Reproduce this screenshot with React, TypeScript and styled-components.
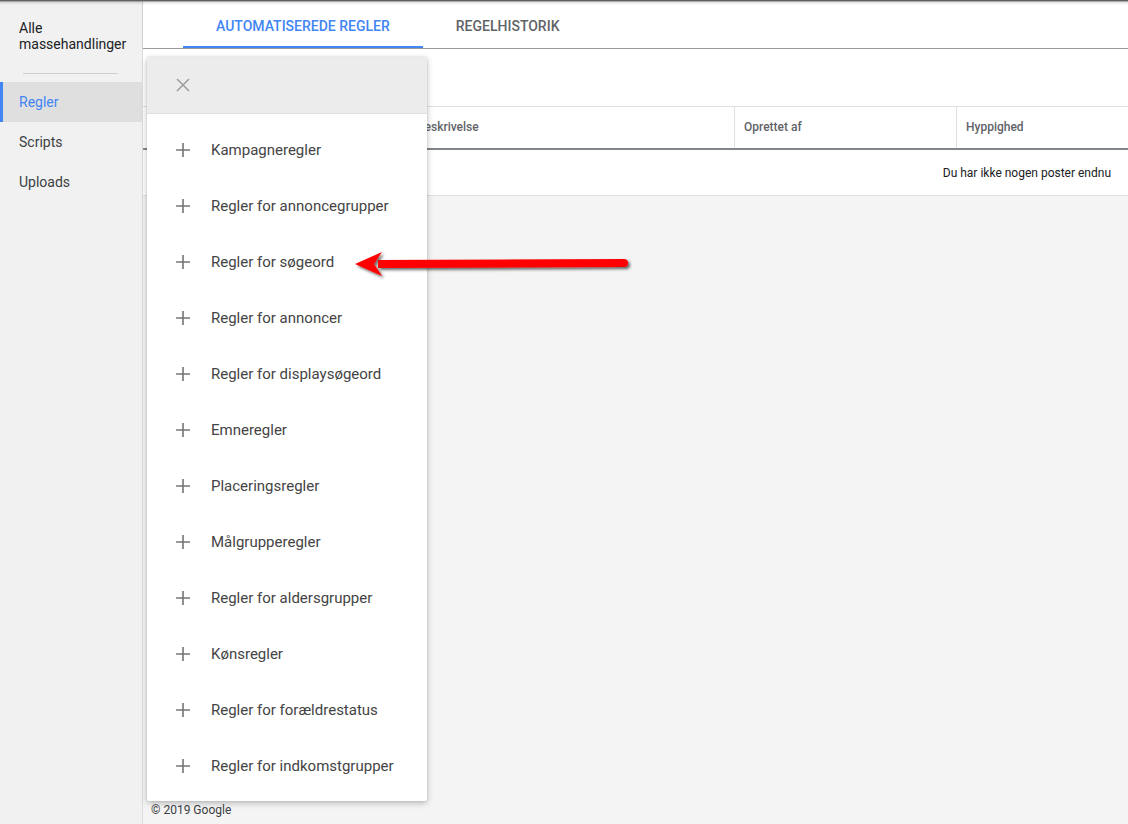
import React from 'react';
import styled, { createGlobalStyle } from 'styled-components';

const GlobalStyle = createGlobalStyle`
  html, body {
    margin: 0;
    padding: 0;
    overflow: hidden;
    font-family: Roboto, "Liberation Sans", Arial, sans-serif;
  }
`;

const Page = styled.div`
  position: relative;
  display: grid;
  grid-template-columns: 143px 1fr;
  width: 1128px;
  height: 824px;
  background-color: #f4f4f4;
`;

const TopShade = styled.div`
  position: absolute;
  top: 0;
  left: 0;
  right: 0;
  height: 5px;
  background: linear-gradient(#4a4a4a 0px, #777 1px, rgba(0, 0, 0, 0.12) 2px, rgba(0, 0, 0, 0));
  z-index: 5;
`;

const Sidebar = styled.nav`
  display: flex;
  flex-direction: column;
  background-color: #f1f1f1;
  border-right: 1px solid #dcdcdc;
  padding-top: 20px;
`;

const SideTitle = styled.div`
  padding: 0 19px;
  font-size: 14px;
  line-height: 16px;
  color: #202124;
`;

const SideDivider = styled.hr`
  border: none;
  border-top: 1px solid #cfcfcf;
  margin: 21px 24px 8px 23px;
`;

const SideItem = styled.div<{ $active?: boolean }>`
  height: 40px;
  display: flex;
  align-items: center;
  padding-left: 19px;
  font-size: 14px;
  color: ${p => (p.$active ? '#4285f4' : '#3c4043')};
  background-color: ${p => (p.$active ? '#dfdfdf' : 'transparent')};
  box-shadow: ${p => (p.$active ? 'inset 3px 0 0 #4285f4' : 'none')};
`;

const Main = styled.main`
  position: relative;
  display: flex;
  flex-direction: column;
  min-width: 0;
`;

const TabBar = styled.div`
  display: flex;
  height: 48px;
  padding-left: 40px;
  background-color: #fff;
  border-bottom: 1px solid #9a9a9a;
  box-shadow: 0 1px 2px rgba(0, 0, 0, 0.15);
`;

const Tab = styled.div<{ $active?: boolean }>`
  display: flex;
  align-items: center;
  padding: 3px 33px 0 33px;
  font-size: 14px;
  font-weight: 500;
  color: ${p => (p.$active ? '#4285f4' : '#5f6368')};
  box-shadow: ${p => (p.$active ? 'inset 0 -2px 0 #4285f4' : 'none')};
`;

const Toolbar = styled.div`
  height: 57px;
  background-color: #fff;
`;

const TableHead = styled.div`
  display: grid;
  grid-template-columns: 591px 222px 1fr;
  height: 41px;
  background-color: #fff;
  border-top: 1px solid #e0e0e0;
  border-bottom: 2px solid #80868b;
`;

const HeadCell = styled.div<{ $pad?: number }>`
  display: flex;
  align-items: center;
  padding-left: ${p => p.$pad ?? 9}px;
  padding-bottom: 1px;
  font-size: 12px;
  font-weight: 500;
  color: #5f6368;
  & + & {
    border-left: 1px solid #e0e0e0;
  }
`;

const EmptyRow = styled.div`
  display: flex;
  align-items: center;
  justify-content: flex-end;
  height: 45px;
  padding-right: 17px;
  background-color: #fff;
  border-bottom: 1px solid #e0e0e0;
  font-size: 12px;
  color: #202124;
`;

const Filler = styled.div`
  flex: 1;
`;

const Footer = styled.div`
  padding: 0 0 7px 8px;
  font-size: 12px;
  color: #3c4043;
`;

const Menu = styled.div`
  position: absolute;
  top: 57px;
  left: 4px;
  width: 280px;
  background-color: #fff;
  border-radius: 2px;
  box-shadow: 0 2px 6px rgba(0, 0, 0, 0.25), 0 0 2px rgba(0, 0, 0, 0.12);
  z-index: 3;
`;

const MenuHeader = styled.div`
  display: flex;
  align-items: center;
  height: 56px;
  padding-left: 28px;
  background-color: #ececec;
  border-bottom: 1px solid #dedede;
  color: #9e9e9e;
`;

const MenuList = styled.div`
  display: flex;
  flex-direction: column;
  padding: 8px 0 7px;
`;

const MenuItem = styled.div`
  display: flex;
  align-items: center;
  height: 56px;
  padding-left: 28px;
  gap: 20px;
  font-size: 15px;
  color: #444;
`;

const PlusIcon = styled.svg`
  width: 16px;
  height: 16px;
  flex: none;
`;

const Arrow = styled.svg`
  position: absolute;
  left: 348px;
  top: 247px;
  z-index: 4;
`;

const rules = [
  'Kampagneregler',
  'Regler for annoncegrupper',
  'Regler for søgeord',
  'Regler for annoncer',
  'Regler for displaysøgeord',
  'Emneregler',
  'Placeringsregler',
  'Målgrupperegler',
  'Regler for aldersgrupper',
  'Kønsregler',
  'Regler for forældrestatus',
  'Regler for indkomstgrupper',
];

function Plus() {
  return (
    <PlusIcon viewBox="0 0 16 16">
      <path d="M8 1v14M1 8h14" stroke="#757575" strokeWidth="1.6" />
    </PlusIcon>
  );
}

function App() {
  return (
    <Page>
      <GlobalStyle />
      <TopShade />
      <Sidebar>
        <SideTitle>
          Alle
          <br />
          massehandlinger
        </SideTitle>
        <SideDivider />
        <SideItem $active>Regler</SideItem>
        <SideItem>Scripts</SideItem>
        <SideItem>Uploads</SideItem>
      </Sidebar>
      <Main>
        <TabBar>
          <Tab $active>AUTOMATISEREDE REGLER</Tab>
          <Tab>REGELHISTORIK</Tab>
        </TabBar>
        <Toolbar />
        <TableHead>
          <HeadCell $pad={274}>Beskrivelse</HeadCell>
          <HeadCell>Oprettet af</HeadCell>
          <HeadCell>Hyppighed</HeadCell>
        </TableHead>
        <EmptyRow>Du har ikke nogen poster endnu</EmptyRow>
        <Filler />
        <Footer>© 2019 Google</Footer>
        <Menu>
          <MenuHeader>
            <svg width="16" height="16" viewBox="0 0 16 16">
              <path d="M2 2l12 12M14 2L2 14" stroke="#9e9e9e" strokeWidth="1.6" />
            </svg>
          </MenuHeader>
          <MenuList>
            {rules.map(r => (
              <MenuItem key={r}>
                <Plus />
                {r}
              </MenuItem>
            ))}
          </MenuList>
        </Menu>
      </Main>
      <Arrow width="292" height="34" viewBox="0 0 292 34">
        <defs>
          <filter id="sh" x="-10%" y="-50%" width="120%" height="200%">
            <feDropShadow dx="2" dy="2" stdDeviation="1.5" floodColor="#000" floodOpacity="0.6" />
          </filter>
        </defs>
        <g filter="url(#sh)">
          <path d="M30 13 L276 12 A4 4 0 0 1 276 20 L30 21 Z" fill="#ff0000" />
          <path d="M7 17 L34 5 L26 17 L34 29 Z" fill="#ff0000" />
        </g>
      </Arrow>
    </Page>
  );
}

export default App;
